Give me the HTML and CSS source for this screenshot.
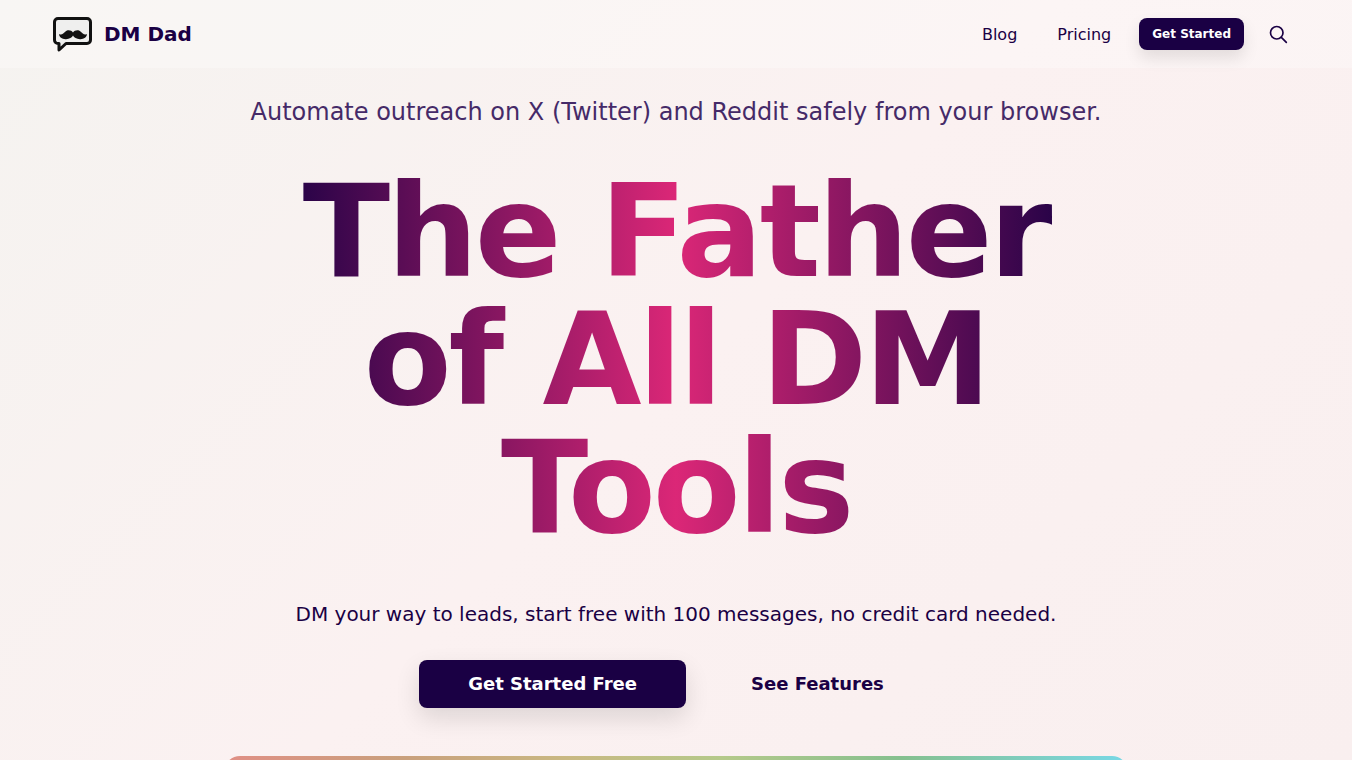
FILE: index.html
```html
<!DOCTYPE html>
<html lang="en">
<head>
    <meta charset="UTF-8">
    <meta name="viewport" content="width=device-width, initial-scale=1.0">
    <title>DM Dad</title>
    <link rel="stylesheet" href="styles.css">
</head>
<body>
    <div class="page">
        <header class="navbar">
            <a class="brand" href="#">
                <svg class="brand-icon" viewBox="0 0 40 36" width="40" height="36">
                    <path d="M6 2.500h29a3.500 3.500 0 0 1 3.500 3.500v18a3.500 3.500 0 0 1-3.500 3.500H14L7 34v-6.500H6A3.500 3.500 0 0 1 2.500 24V6A3.500 3.500 0 0 1 6 2.500z" fill="#efefee" stroke="#111" stroke-width="3" stroke-linejoin="round"/>
                    <path d="M21 16.500C19.500 14 15.500 13.500 13.500 15.500C11.500 17.500 9.500 19.500 7 18C7 21 10.500 23.500 14 23.200C17.500 23 20 21.500 21 19.500C22 21.500 24.500 23 28 23.200C31.500 23.500 35 21 35 18C32.500 19.500 30.500 17.500 28.500 15.500C26.500 13.500 22.500 14 21 16.500Z" fill="#111"/>
                </svg>
                <span class="brand-name">DM Dad</span>
            </a>
            <nav class="nav-links">
                <a class="nav-link" href="#">Blog</a>
                <a class="nav-link" href="#">Pricing</a>
                <a class="nav-cta" href="#">Get Started</a>
                <a class="nav-search" href="#" aria-label="Search">
                    <svg viewBox="0 0 24 24" width="20" height="20" fill="none" stroke="#1a0044" stroke-width="2" stroke-linecap="round">
                        <circle cx="10.500" cy="10.500" r="7.500"/>
                        <path d="M16 16l6 6"/>
                    </svg>
                </a>
            </nav>
        </header>

        <main class="hero">
            <p class="tagline">Automate outreach on X (Twitter) and Reddit safely from your browser.</p>
            <h1 class="title">The Father<br>of All DM<br>Tools</h1>
            <p class="lead">DM your way to leads, start free with 100 messages, no credit card needed.</p>
            <div class="actions">
                <a class="btn btn-primary" href="#">Get Started Free</a>
                <a class="btn btn-ghost" href="#">See Features</a>
            </div>
            <div class="preview"></div>
        </main>
    </div>
</body>
</html>
```

FILE: styles.css
```css
* {
    box-sizing: border-box;
}
html, body {
    margin: 0;
    height: 100%;
    overflow: hidden;
}
body {
    font-family: "DejaVu Sans", sans-serif;
    color: #1a0044;
}
a {
    color: inherit;
    text-decoration: none;
}
.page {
    height: 100vh;
    overflow: hidden;
    background-image: linear-gradient(135deg, #f5f3f0, #fbf1f1 50%, #f9efef);
}

.navbar {
    height: 68px;
    padding: 0 53px 0 52px;
    display: flex;
    justify-content: space-between;
    align-items: center;
    background-color: rgba(255, 255, 255, 0.3);
}
.brand {
    display: flex;
    align-items: center;
    gap: 12px;
}
.brand-icon {
    display: block;
}
.brand-name {
    font-size: 20px;
    font-weight: 700;
}
.nav-links {
    display: flex;
    align-items: center;
    font-size: 16px;
}
.nav-link {
    margin-right: 40px;
}
.nav-link:nth-child(2) {
    margin-right: 28px;
}
.nav-cta {
    height: 32px;
    padding: 0 13px;
    display: flex;
    align-items: center;
    font-size: 12px;
    font-weight: 700;
    color: #fff;
    background-color: #1a0044;
    border-radius: 8px;
    box-shadow: 0 8px 16px rgba(0, 0, 0, 0.1);
}
.nav-search {
    width: 42px;
    margin-left: 13px;
    display: flex;
    justify-content: center;
}

.hero {
    padding-top: 28px;
    display: flex;
    flex-direction: column;
    align-items: center;
    text-align: center;
}
.tagline {
    margin: 0;
    font-size: 24px;
    line-height: 32px;
    color: #452a68;
}
.title {
    width: 820px;
    margin: 40px 0 0;
    font-size: 128px;
    line-height: 128px;
    font-weight: 900;
    letter-spacing: -3.2px;
    white-space: nowrap;
    color: transparent;
    background-image: linear-gradient(90deg, #1a0044, #db2777 50%, #1a0044);
    -webkit-background-clip: text;
    background-clip: text;
}
.lead {
    margin: 48px 0 0;
    font-size: 20px;
    line-height: 28px;
}
.actions {
    margin-top: 32px;
    display: flex;
    gap: 16px;
}
.btn {
    height: 48px;
    padding: 0 49px 2px;
    display: flex;
    align-items: center;
    font-size: 18px;
    font-weight: 700;
    border-radius: 8px;
}
.btn-primary {
    color: #fff;
    background-color: #1a0044;
    box-shadow: 0 10px 24px rgba(0, 0, 0, 0.12);
}
.preview {
    width: 904px;
    height: 400px;
    margin-top: 48px;
    flex: none;
    border-radius: 16px;
    background-image: linear-gradient(90deg, #e08f85, #c9a07c 20%, #c9b882 38%, #b5c98a 55%, #85c08f 75%, #78d8e6);
}
```
